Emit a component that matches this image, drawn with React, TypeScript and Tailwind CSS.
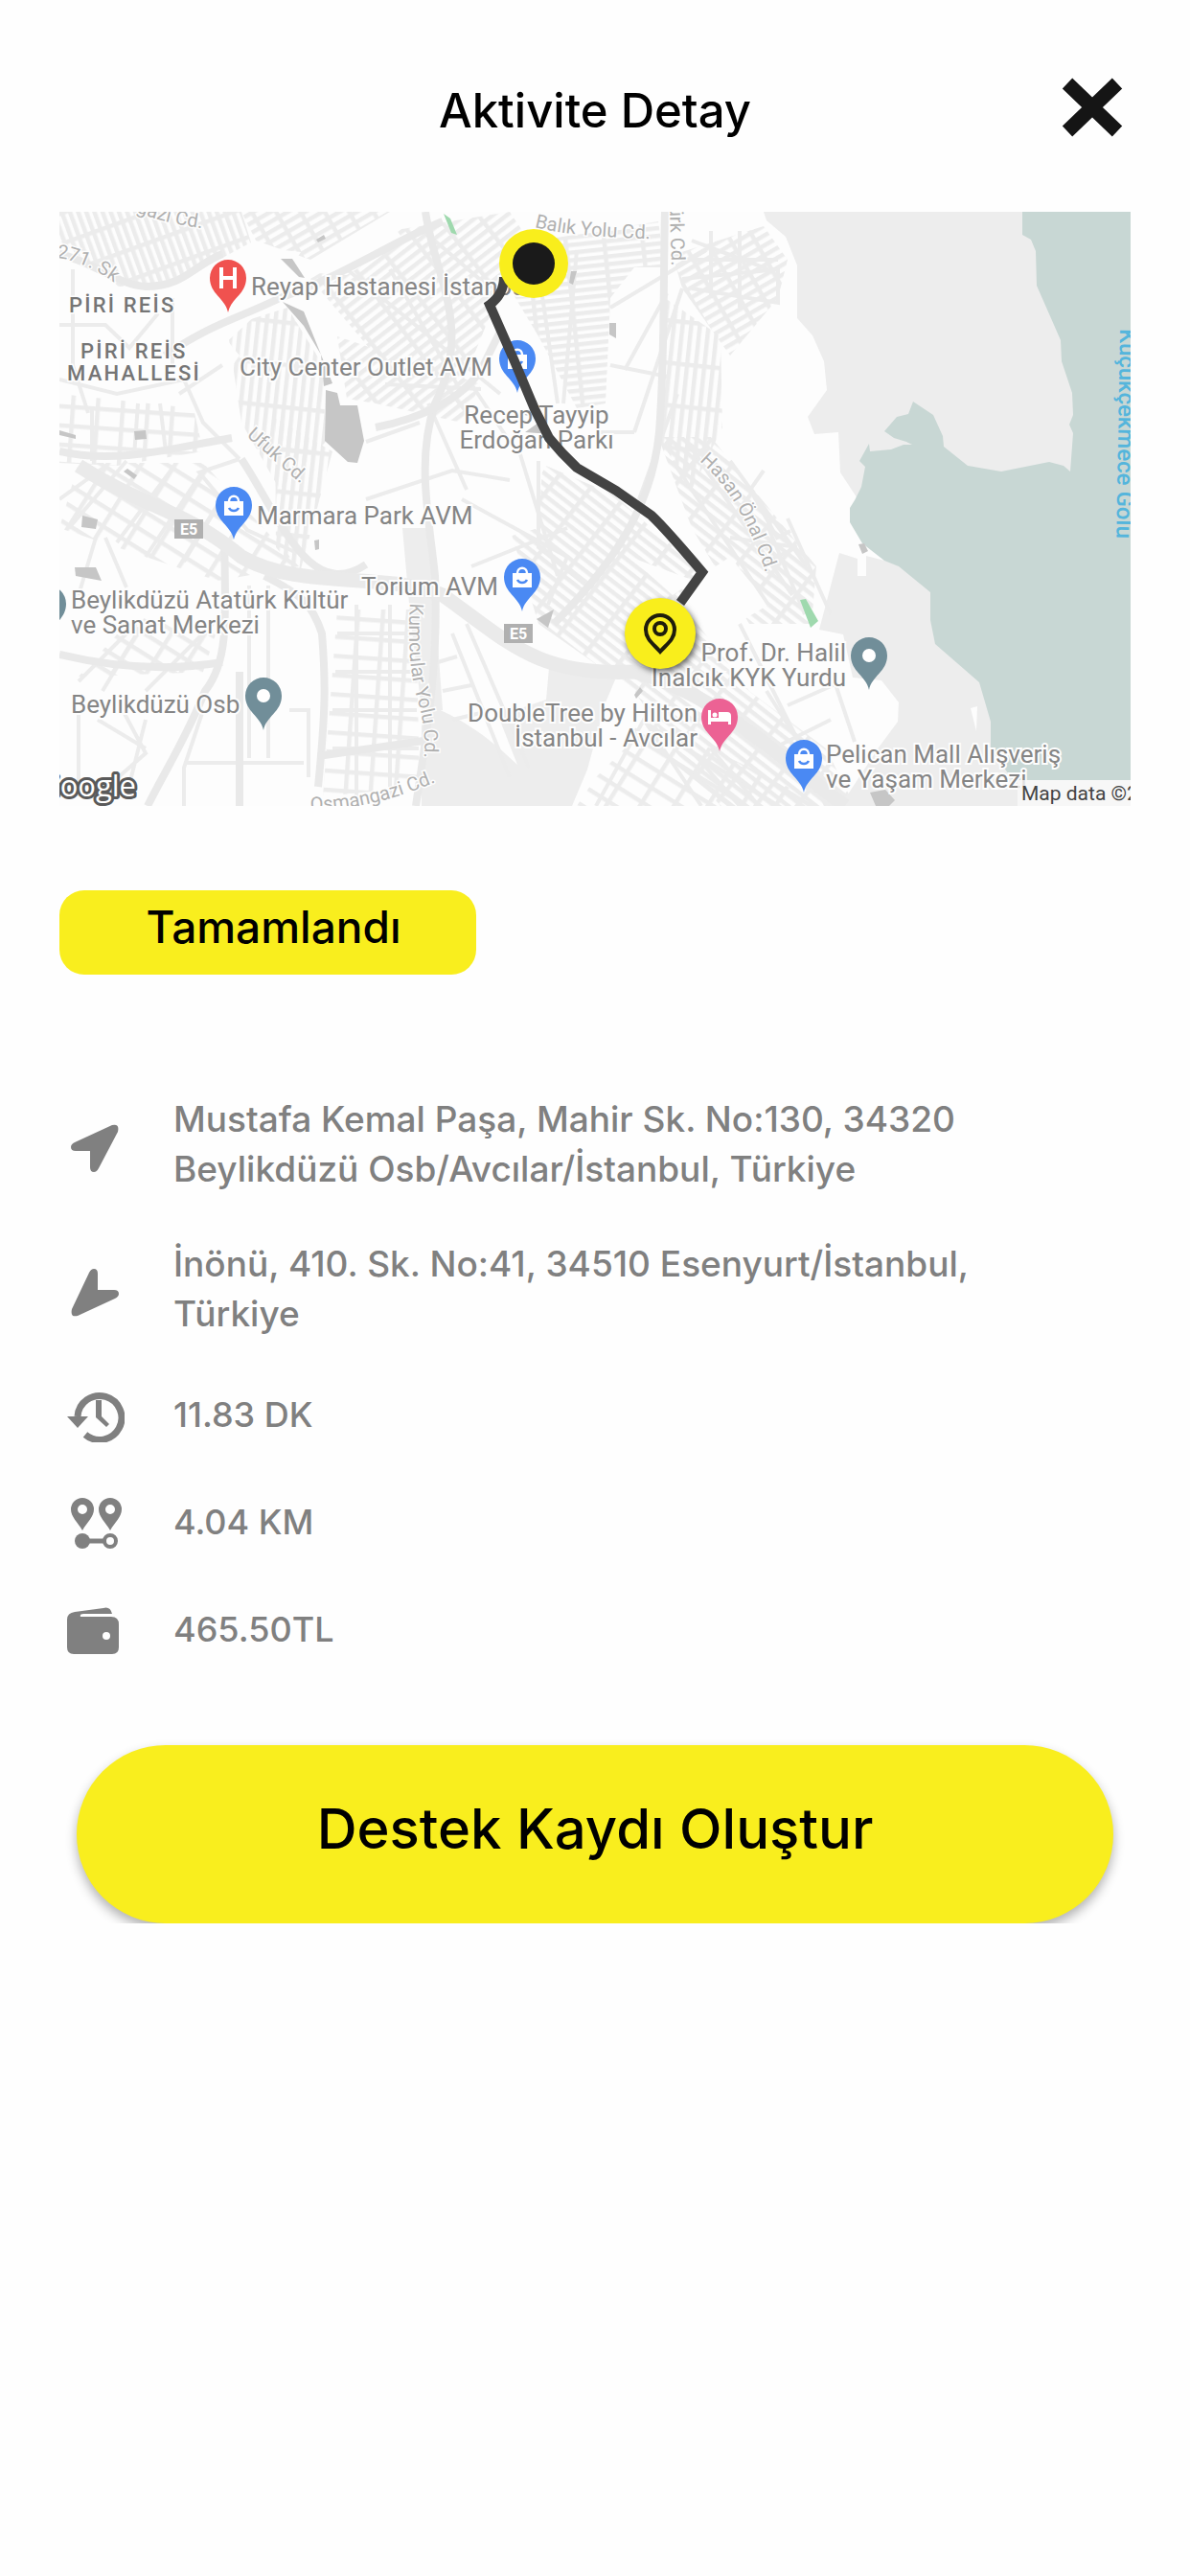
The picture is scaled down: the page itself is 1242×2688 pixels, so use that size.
import type { ReactNode } from "react";

const districts = [
  { area: "0,0 190,0 200,32 120,75 62,78 0,30", fill: "url(#gridA)" },
  { area: "190,0 345,0 262,50 205,30", fill: "url(#gridB)" },
  { area: "345,20 470,0 490,30 455,95 420,180 330,150 262,70", fill: "url(#gridC)" },
  { area: "175,120 238,100 275,160 278,240 230,290 190,220", fill: "url(#gridD)" },
  { area: "290,130 440,180 420,220 330,200 300,195", fill: "url(#gridC)" },
  { area: "500,30 625,10 632,58 600,58 575,90 570,200 540,205 500,130 470,80", fill: "url(#gridE)" },
  { area: "640,45 735,15 760,50 750,90 700,150 650,80", fill: "url(#gridB)" },
  { area: "632,90 690,130 692,225 660,290 625,235", fill: "url(#gridD)" },
  { area: "625,235 680,235 790,370 785,430 720,430 660,330", fill: "url(#gridF)" },
  { area: "508,265 578,295 671,376 648,407 720,500 800,560 830,620 690,620 640,560 600,500 500,430 470,330", fill: "url(#gridF)" },
  { area: "0,190 140,205 150,250 60,265 0,262", fill: "url(#gridG)" },
  { area: "20,262 150,262 250,370 165,385 0,330", fill: "url(#gridH)" },
  { area: "70,430 172,430 160,480 20,485", fill: "url(#gridH)" },
  { area: "290,415 372,415 376,600 275,610", fill: "url(#gridG)" },
  { area: "225,215 285,250 250,380 226,350", fill: "url(#gridD)" },
  { area: "560,590 620,530 760,600 790,620 540,620", fill: "url(#gridH)" },
];

const fields = [
  "120,76 200,36 252,42 218,96 170,140 118,90",
  "258,60 300,28 345,10 360,30 300,66 268,64",
  "15,90 118,76 118,160 60,190 15,150",
  "150,150 170,128 188,150 160,190 138,200",
  "575,95 632,62 632,170 575,160",
  "320,230 380,222 384,300 350,290",
  "386,320 414,310 420,370 386,372",
  "390,230 480,210 505,250 500,330 430,350 395,280",
  "150,480 180,390 260,410 268,520 240,600 130,610",
  "390,410 430,410 510,470 515,495 480,530 450,520 400,470",
  "280,345 345,345 350,370 285,372",
  "595,360 640,400 700,360 740,410 715,425 690,395",
];

const minorRoads = [
  "M0 118h48l25 24 30-36M14 60v100l16 50M118 90v74M34 205v55M82 200l-4 55M105 200l6 50",
  "M0 175l60 15 70-15 20 45 38 38M125 190l45-30M188 258l-42 14 50 60 52 24",
  "M0 300l50-36M10 330l60-70M60 345l60-80M90 360l60-90M130 365l34-56M20 400l18-60M70 392l-22-52",
  "M20 490l60-60M45 500l45-75M90 500l70-70M20 520v90M90 530l-20 80M40 530l50 30M66 520l24 45-40 35",
  "M198 390v180M218 390v180M240 520h20v70M130 575h125M150 520l-20 60v40",
  "M290 440h80M288 480h80M285 520h88M285 560h90M310 410v200M345 410v200",
  "M320 240l56-20M320 300l90-30 60 10M385 200l40 90M340 180l100 5",
  "M420 300l110 60-20 50M430 370l100-40M480 250l40 130M500 260v90l50 40",
  "M575 160l60 12M575 100l100-60M590 165l44-80M600 230l50-150M560 230h40M605 300l40-110",
  "M650 50h100M660 30l80 30M680 20v70M710 20v80M650 70l100-10v35l-90-15",
  "M655 240l110 160M640 260l100 150M700 260l80 110M735 270l-14 20 28 50 14-7",
  "M760 320l45 100M740 330l38 90M770 350l-30 14M700 340l70 10M710 430l60 120 30 70",
  "M760 515l50-22 20 60M745 560l60-30M738 500l70 110",
  "M560 620l50-90 60 90M600 540l100 80M640 540l70 80M680 560l50 60",
  "M410 440l60 150M425 430l65 150M395 470l20-6M400 500l30-6M410 530l34-8",
  "M430 180l40 60M345 60l70 120M300 60l160 130M380 20l70 60M500 60l20 140M540 40l-14 160",
];

const majorRoads = [
  "M0 250c60 14 120-4 180-14",
  "M110 150c50-34 80-40 120-60 60-20 120-60 170-80",
  "M0 44c40 10 60 32 90 34 40 0 50-22 80-34",
  "M190 258c40 60 70 150 130 110",
  "M172 340c2 90 4 130-20 160-20 50-40 80-60 120",
  "M0 462c50 12 110 18 170 8",
  "M382 0c10 70 50 120 10 200-20 60-6 120 0 180 4 90-8 160-20 240",
  "M632 0c-2 80 0 150-6 230-6 60-30 120-110 200",
  "M270 600c8-80 8-110 4-160-10-30-20-40-60-60",
  "M188 480v140M270 568l110-16",
  "M330 225c50-10 90-30 110-60l20-40",
];

const buildings = [
  "278,186 290,189 293,202 311,202 318,239 311,262 301,261 277,239",
  "233,94 255,104 285,179 276,182 273,149 255,119",
  "231,49 243,49 256,69 250,68",
  "268,29 276,24 278,28 270,32",
  "574,116 581,116 581,132 574,128",
  "534,62 540,62 536,76 532,74",
  "78,229 90,228 91,237 79,238",
  "67,271 71,268 81,275 78,279",
  "0,228 17,233 17,237 0,233",
  "24,317 40,321 38,331 23,329",
  "16,371 38,371 44,385 17,380",
  "266,343 271,342 271,352 267,353",
  "498,425 516,415 510,434",
  "600,504 606,496 609,500 602,508",
  "834,347 840,346 844,354 838,357",
  "846,606 862,603 872,614 866,620 852,620",
  "500,215 485,212 490,206",
  "486,230 500,220 512,232",
];

const poiLabels = [
  { text: "Reyap Hastanesi İstanbul", x: 200, y: 87 },
  { text: "City Center Outlet AVM", x: 188, y: 171 },
  { text: "Recep Tayyip", x: 498, y: 221, anchor: "middle" },
  { text: "Erdoğan Parkı", x: 498, y: 247, anchor: "middle" },
  { text: "Marmara Park AVM", x: 206, y: 326 },
  { text: "Torium AVM", x: 458, y: 400, anchor: "end" },
  { text: "Beylikdüzü Atatürk Kültür", x: 12, y: 414 },
  { text: "ve Sanat Merkezi", x: 12, y: 440 },
  { text: "Beylikdüzü Osb", x: 12, y: 523 },
  { text: "Prof. Dr. Halil", x: 821, y: 469, anchor: "end" },
  { text: "İnalcık KYK Yurdu", x: 821, y: 495, anchor: "end" },
  { text: "DoubleTree by Hilton", x: 666, y: 532, anchor: "end" },
  { text: "İstanbul - Avcılar", x: 666, y: 558, anchor: "end" },
  { text: "Pelican Mall Alışveriş", x: 800, y: 575 },
  { text: "ve Yaşam Merkezi", x: 800, y: 601 },
] as const;

const streetLabels = [
  { text: "271. Sk", path: "M-3 48Q32 52 70 84" },
  { text: "gazi Cd.", path: "M80 0Q118 16 180 20" },
  { text: "Ufuk Cd.", path: "M195 234L275 304" },
  { text: "Balık Yolu Cd.", path: "M496 16Q540 28 660 29" },
  { text: "ürk Cd.", path: "M637 -6L640 90" },
  { text: "Hasan Önal Cd.", path: "M668 260Q715 300 742 392" },
  { text: "Kumcular Yolu Cd.", path: "M366 408Q362 470 374 510T378 590" },
  { text: "Osmangazi Cd.", path: "M262 625Q330 624 404 590" },
];

const shops = [
  { x: 182, y: 306 },
  { x: 478, y: 153 },
  { x: 483, y: 381 },
  { x: 777, y: 570 },
];

const places = [
  { x: -12, y: 409 },
  { x: 213, y: 505 },
  { x: 845, y: 463 },
];

function Pin({ x, y, color, children }: { x: number; y: number; color: string; children?: ReactNode }) {
  return (
    <g transform={`translate(${x} ${y})`}>
      <path d="M0 36C-3 21-19 17-19 0a19 19 0 0 1 38 0C19 17 3 21 0 36z" fill={color} />
      {children}
    </g>
  );
}

function Grid({ id, angle, w, h }: { id: string; angle: number; w: number; h: number }) {
  return (
    <pattern id={id} width={w} height={h} patternUnits="userSpaceOnUse" patternTransform={`rotate(${angle})`}>
      <path d={`M0 0H${w}M0 0V${h}`} stroke="#ececec" strokeWidth="9" fill="none" />
    </pattern>
  );
}

function RouteMap() {
  return (
    <svg viewBox="0 0 1118 620" className="block h-auto w-full font-[Roboto,sans-serif]" role="img" aria-label="Rota haritası">
      <defs>
        <Grid id="gridA" angle={-20} w={8} h={30} />
        <Grid id="gridB" angle={60} w={9} h={22} />
        <Grid id="gridC" angle={-38} w={34} h={9} />
        <Grid id="gridD" angle={6} w={9} h={44} />
        <Grid id="gridE" angle={-6} w={40} h={8} />
        <Grid id="gridF" angle={38} w={34} h={9} />
        <Grid id="gridG" angle={4} w={26} h={20} />
        <Grid id="gridH" angle={32} w={30} h={18} />
        {streetLabels.map((s, i) => (
          <path key={s.text} id={`street${i}`} d={s.path} />
        ))}
      </defs>
      <rect width="1118" height="620" fill="#fdfdfd" />

      {districts.map((d) => (
        <polygon key={d.area} points={d.area} fill={d.fill} />
      ))}
      {fields.map((f) => (
        <polygon key={f} points={f} fill="#fdfdfd" />
      ))}

      {/* open land */}
      <g fill="#ededed">
        <path d="M735 0L738 9 758 26 770 56V111L786 129 798 156 801 186 781 214 788 232 813 230 815 272 840 310 1118 310V0z" />
        <path d="M814 356L833 362V380H842V359L1000 400V620H815L855 559 875 532 876 512 858 489 828 486 818 441 793 436z" />
        <path d="M511 476L581 486 570 512 551 582 535 620H378V512Q430 530 478 577L458 526 508 509z" />
        <path d="M358 330H386L392 410 400 520 378 520 366 420z" />
      </g>
      <path d="M951 518L958 516 957 542z" fill="#fdfdfd" />

      <g fill="none" stroke="#ececec" strokeWidth="4">
        {minorRoads.map((d) => (
          <path key={d} d={d} />
        ))}
      </g>
      <g fill="none" stroke="#e9e9e9" strokeWidth="8">
        {majorRoads.map((d) => (
          <path key={d} d={d} />
        ))}
      </g>
      <path
        d="M20 265C90 310 130 310 190 360 250 395 340 375 400 400 470 450 500 485 600 480 680 500 740 560 820 620"
        fill="none"
        stroke="#eaeaea"
        strokeWidth="15"
      />

      {/* lake */}
      <path
        d="M1005 0V24L1014 29 1019 41 1020 77 1045 134 1046 156 1057 189 1058 212 1054 222 1058 231 1055 271 1048 265 1033 261 983 271 948 265 923 245 922 234 912 212 891 198 886 211 874 214 861 229 871 236 884 240 890 243 881 243 868 248 846 250 845 242 835 260 841 266 837 287 830 301 825 309V324L838 346 861 364 876 370 909 397V426L914 451 960 491 972 532V560L995 593H1118V0z"
        fill="#c8d7d4"
      />
      <g fill="#c6c6c6">
        {buildings.map((b) => (
          <polygon key={b} points={b} />
        ))}
      </g>
      <path d="M401 2L408 7 415 24 409 22zM773 405L779 404 792 427 784 434z" fill="#9fd9ae" />

      {/* street names */}
      <g className="text-[20px]" fill="#b0b0b0" stroke="#fdfdfd" strokeWidth="3" paintOrder="stroke">
        {streetLabels.map((s, i) => (
          <text key={s.text}>
            <textPath href={`#street${i}`}>{s.text}</textPath>
          </text>
        ))}
      </g>
      <text transform="translate(1107 122) rotate(91)" className="text-[24px] font-medium" fill="#54b5dc">
        Küçükçekmece Gölü
      </text>

      {/* road shields */}
      <g className="text-[16px] font-bold" fill="#ffffff" textAnchor="middle">
        <rect x="120" y="321" width="30" height="20" fill="#b0b0b0" />
        <text x="135" y="337">E5</text>
        <rect x="464" y="430" width="30" height="20" fill="#b0b0b0" />
        <text x="479" y="446">E5</text>
      </g>

      <g className="text-[22px] font-medium tracking-widest" fill="#757575" stroke="#fdfdfd" strokeWidth="3" paintOrder="stroke">
        <text x="10" y="105">PİRİ REİS</text>
        <text x="22" y="153">PİRİ REİS</text>
        <text x="8" y="176">MAHALLESİ</text>
      </g>
      <g className="text-[26px]" fill="#858585" stroke="#fdfdfd" strokeWidth="4" paintOrder="stroke">
        {poiLabels.map((l) => (
          <text key={l.text} x={l.x} y={l.y} textAnchor={"anchor" in l ? l.anchor : "start"}>
            {l.text}
          </text>
        ))}
      </g>

      <Pin x={176} y={69} color="#f0524f">
        <path d="M-7-11V11M7-11V11M-7 0H7" stroke="#fff" strokeWidth="4" />
      </Pin>
      {shops.map((s) => (
        <Pin key={s.x} x={s.x} y={s.y} color="#4a89f3">
          <path d="M-10-4H10V11H-10z" fill="#fff" />
          <path d="M-5-4c0-7 10-7 10 0" fill="none" stroke="#fff" strokeWidth="2.5" />
          <path d="M-5 3c2 4 8 4 10 0" fill="none" stroke="#4a89f3" strokeWidth="2.5" />
        </Pin>
      ))}
      {places.map((p) => (
        <Pin key={p.x} x={p.x} y={p.y} color="#718e99">
          <circle r="7" fill="#fff" />
        </Pin>
      ))}
      <Pin x={689} y={527} color="#ec6294">
        <path d="M-12-7h3V1H-1V-5H8q4 0 4 4V8H9V5H-9V8h-3z" fill="#fff" />
        <circle cx="-5" cy="-2" r="2.5" fill="#fff" />
      </Pin>

      {/* route */}
      <path
        d="M464 68Q464 86 449 97L475 156 496 206 511 236Q524 252 540 267L581 291 618 317Q632 330 671 376L648 408"
        fill="none"
        stroke="#434343"
        strokeWidth="10"
      />
      <circle cx="495" cy="54" r="36" fill="#f9ee1c" />
      <circle cx="495" cy="54" r="22" fill="#1a1a1a" />
      <g className="drop-shadow-[2px_3px_3px_rgba(0,0,0,0.6)]">
        <circle cx="627" cy="440" r="37" fill="#f9ee1c" />
      </g>
      <path d="M627 459C620 451 612 446 612 436a15 15 0 0 1 30 0C642 446 634 451 627 459z" fill="none" stroke="#1f1d0c" strokeWidth="4" />
      <circle cx="627" cy="435" r="6" fill="none" stroke="#1f1d0c" strokeWidth="4" />

      {/* attribution */}
      <text
        x="80"
        y="610"
        textAnchor="end"
        className="font-['Open_Sans',sans-serif] text-[31px]"
        fill="#ffffff"
        stroke="#5a5a5a"
        strokeWidth="6"
        strokeLinejoin="round"
        paintOrder="stroke"
      >
        Google
      </text>
      <rect x="1000" y="593" width="118" height="27" fill="#f5f5f5" fillOpacity="0.8" />
      <text x="1004" y="614" className="text-[21px]" fill="#444444">
        Map data ©2
      </text>
    </svg>
  );
}

function FromIcon() {
  return (
    <svg viewBox="0 0 50 50" className="size-[50px]" aria-hidden="true">
      <path d="M43 1q8-2 6 7L29 46q-2 4-5 4-4 0-4-5V28H5q-5 0-5-4 0-3 4-5z" fill="#808080" />
    </svg>
  );
}

function ToIcon() {
  return (
    <svg viewBox="0 0 50 50" className="size-[50px]" aria-hidden="true">
      <path d="M7 49q-8 2-6-7L19 4q2-4 5-4 4 0 4 5V22H45q5 0 5 4 0 3-4 5z" fill="#808080" />
    </svg>
  );
}

function HistoryIcon() {
  return (
    <svg viewBox="0 0 60 54" className="h-[54px] w-[60px]" aria-hidden="true">
      <path d="M11 27A23 23 0 1 1 19 46" fill="none" stroke="#808080" strokeWidth="7" />
      <path d="M0 27H22L11 39z" fill="#808080" />
      <path d="M30 10h6V27L44 35 41 38 30 28z" fill="#808080" />
    </svg>
  );
}

function DistanceIcon() {
  return (
    <svg viewBox="-4 0 60 54" className="h-[54px] w-[60px]" aria-hidden="true">
      <g fill="#808080" fillRule="evenodd">
        <path d="M12 34C7 25 0 20 0 12a12 12 0 0 1 24 0C24 20 17 25 12 34zM12 7a5 5 0 1 0 0 10 5 5 0 0 0 0-10z" />
        <path d="M41 34C36 25 29 20 29 12a12 12 0 0 1 24 0C53 20 46 25 41 34zM41 7a5 5 0 1 0 0 10 5 5 0 0 0 0-10z" />
        <circle cx="12" cy="45" r="8" />
      </g>
      <path d="M18 45H35" stroke="#808080" strokeWidth="5" />
      <circle cx="41" cy="45" r="6" fill="none" stroke="#808080" strokeWidth="4" />
    </svg>
  );
}

function WalletIcon() {
  return (
    <svg viewBox="0 0 54 50" className="h-[50px] w-[54px]" aria-hidden="true">
      <path d="M0 13Q0 6 8 5L38 1Q45-1 47 7H17Q13 7 14 10H46Q54 10 54 18V42Q54 49 47 49H7Q0 49 0 42z" fill="#808080" />
      <circle cx="41" cy="30" r="4" fill="#fff" />
    </svg>
  );
}

const addresses = [
  { text: "Mustafa Kemal Paşa, Mahir Sk. No:130, 34320 Beylikdüzü Osb/Avcılar/İstanbul, Türkiye", icon: <FromIcon /> },
  { text: "İnönü, 410. Sk. No:41, 34510 Esenyurt/İstanbul, Türkiye", icon: <ToIcon /> },
];

const stats = [
  { text: "11.83 DK", icon: <HistoryIcon /> },
  { text: "4.04 KM", icon: <DistanceIcon /> },
  { text: "465.50TL", icon: <WalletIcon /> },
];

export default function App() {
  return (
    <main className="min-h-screen bg-[#fefefe] px-[62px] font-[Inter,sans-serif] text-black">
      <header className="grid grid-cols-[1fr_auto_1fr] items-center pt-[76px]">
        <h1 className="col-start-2 pt-2 text-[49px] leading-[64px] font-medium">Aktivite Detay</h1>
        <button type="button" aria-label="Kapat" className="mr-2 justify-self-end">
          <svg viewBox="0 0 64 62" className="h-[62px] w-16" aria-hidden="true">
            <path d="M6 6L58 56M58 6L6 56" stroke="#151515" strokeWidth="15" />
          </svg>
        </button>
      </header>

      <section className="mt-[73px]">
        <RouteMap />
      </section>

      <div className="mt-[88px] flex h-[88px] w-[435px] items-start justify-center rounded-[26px] bg-[#f9ee1e] pt-[10px] pl-3 text-[46px] leading-[56px] font-medium">
        Tamamlandı
      </div>

      <ul className="mt-[125px] flex flex-col gap-[47px] pr-[100px] text-[37px] leading-[52px] font-medium text-[#808080]">
        {addresses.map((a) => (
          <li key={a.text} className="flex items-center">
            <span className="flex w-[119px] shrink-0 pt-2 pl-3">{a.icon}</span>
            <span>{a.text}</span>
          </li>
        ))}
      </ul>
      <ul className="mt-[51px] flex flex-col gap-14 text-[36px] leading-[52px] font-medium text-[#808080]">
        {stats.map((s) => (
          <li key={s.text} className="flex h-14 items-center">
            <span className="flex w-[119px] shrink-0 pt-1 pl-2">{s.icon}</span>
            <span>{s.text}</span>
          </li>
        ))}
      </ul>

      <div className="mt-[73px] overflow-hidden px-[18px] pt-5">
        <button
          type="button"
          className="block h-[186px] w-full rounded-full bg-[#f9ee1e] pb-3 text-[58px] font-medium shadow-[0_6px_12px_rgba(0,0,0,0.3)]"
        >
          Destek Kaydı Oluştur
        </button>
      </div>
    </main>
  );
}
